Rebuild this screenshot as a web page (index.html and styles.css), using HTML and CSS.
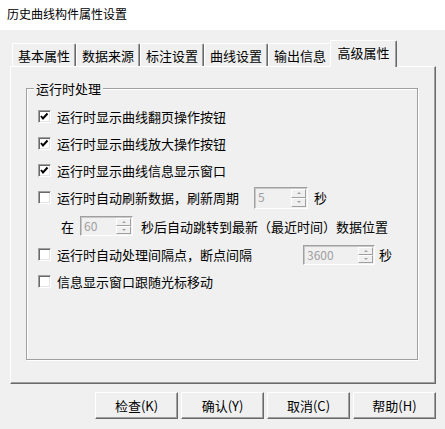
FILE: index.html
```html
<!DOCTYPE html>
<html lang="zh-CN">
<head>
    <meta charset="UTF-8">
    <title>历史曲线构件属性设置</title>
    <link rel="stylesheet" href="styles.css">
</head>
<body>
    <div class="titlebar">历史曲线构件属性设置</div>

    <div class="dialog">
        <div class="tabs">
            <div class="tab">基本属性</div>
            <div class="tab">数据来源</div>
            <div class="tab">标注设置</div>
            <div class="tab">曲线设置</div>
            <div class="tab">输出信息</div>
            <div class="tab active">高级属性</div>
        </div>

        <div class="panel">
            <div class="group">
                <span class="group-title">运行时处理</span>

                <div class="row">
                    <span class="check checked"><svg width="9" height="9" viewBox="0 0 9 9"><polyline points="1,4 3,6.5 7.5,1.5" fill="none" stroke="#000" stroke-width="2"/></svg></span>
                    <span>运行时显示曲线翻页操作按钮</span>
                </div>
                <div class="row">
                    <span class="check checked"><svg width="9" height="9" viewBox="0 0 9 9"><polyline points="1,4 3,6.5 7.5,1.5" fill="none" stroke="#000" stroke-width="2"/></svg></span>
                    <span>运行时显示曲线放大操作按钮</span>
                </div>
                <div class="row">
                    <span class="check checked"><svg width="9" height="9" viewBox="0 0 9 9"><polyline points="1,4 3,6.5 7.5,1.5" fill="none" stroke="#000" stroke-width="2"/></svg></span>
                    <span>运行时显示曲线信息显示窗口</span>
                </div>
                <div class="row">
                    <span class="check"></span>
                    <span class="label label-refresh">运行时自动刷新数据，刷新周期</span>
                    <span class="spin spin-tall">
                        <span class="spin-value">5</span>
                        <span class="spin-buttons"><span class="spin-up"></span><span class="spin-down"></span></span>
                    </span>
                    <span class="unit">秒</span>
                </div>
                <div class="row row-sub">
                    <span class="sub-label">在</span>
                    <span class="spin spin-small">
                        <span class="spin-value">60</span>
                        <span class="spin-buttons"><span class="spin-up"></span><span class="spin-down"></span></span>
                    </span>
                    <span class="sub-text">秒后自动跳转到最新（最近时间）数据位置</span>
                </div>
                <div class="row">
                    <span class="check"></span>
                    <span class="label label-gap">运行时自动处理间隔点，断点间隔</span>
                    <span class="spin spin-wide">
                        <span class="spin-value">3600</span>
                        <span class="spin-buttons"><span class="spin-up"></span><span class="spin-down"></span></span>
                    </span>
                    <span class="unit unit-near">秒</span>
                </div>
                <div class="row">
                    <span class="check"></span>
                    <span>信息显示窗口跟随光标移动</span>
                </div>
            </div>
        </div>

        <div class="buttons">
            <button class="btn">检查(K)</button>
            <button class="btn">确认(Y)</button>
            <button class="btn">取消(C)</button>
            <button class="btn">帮助(H)</button>
        </div>
    </div>
</body>
</html>
```

FILE: styles.css
```css
body {
    margin: 0;
    background-color: #f0f0f0;
    font-family: "Noto Sans CJK SC", "Liberation Sans", sans-serif;
    font-size: 12px;
    line-height: 14px;
    color: #000;
}
.titlebar {
    height: 30px;
    box-sizing: border-box;
    padding: 7px 0 0 7px;
    background-color: #fff;
}
.dialog {
    padding: 10px 9px 10px 10px;
    font-size: 13px;
    line-height: 15px;
}

/* tabs */
.tabs {
    display: flex;
    align-items: flex-end;
    height: 26px;
    padding-left: 2px;
}
.tab {
    width: 64px;
    height: 23px;
    box-sizing: border-box;
    padding-top: 4px;
    text-align: center;
    border-top: 1px solid #fff;
    border-left: 1px solid #fff;
    border-right: 1px solid #696969;
    box-shadow: inset -1px 0 0 #a0a0a0;
    border-radius: 2px 2px 0 0;
}
.tab.active {
    position: relative;
    z-index: 1;
    width: 67px;
    height: 27px;
    margin-left: -2px;
    margin-bottom: -1px;
    padding-top: 4px;
    background-color: #f0f0f0;
}

/* page under the tabs */
.panel {
    height: 318px;
    box-sizing: border-box;
    border-top: 1px solid #fff;
    border-left: 1px solid #fff;
    border-right: 1px solid #696969;
    border-bottom: 1px solid #696969;
    box-shadow: inset -1px -1px 0 #a0a0a0;
    padding: 21px 0 0 15px;
}
.group {
    position: relative;
    width: 392px;
    height: 272px;
    box-sizing: border-box;
    border: 1px solid #a0a0a0;
    box-shadow: inset 1px 1px 0 #fff, 1px 1px 0 #fff;
    padding: 14px 0 0 11px;
}
.group-title {
    position: absolute;
    top: -8px;
    left: 7px;
    padding: 0 2px;
    background-color: #f0f0f0;
}

.row {
    display: flex;
    align-items: center;
    height: 27px;
}
.row-sub {
    height: 30px;
}
.check {
    display: flex;
    align-items: center;
    justify-content: center;
    width: 13px;
    height: 13px;
    box-sizing: border-box;
    margin-right: 6px;
    background-color: #fff;
    border-top: 1px solid #a0a0a0;
    border-left: 1px solid #a0a0a0;
    border-right: 1px solid #fff;
    border-bottom: 1px solid #fff;
    box-shadow: inset 1px 1px 0 #696969, inset -1px -1px 0 #e3e3e3;
}
.label-refresh {
    width: 197px;
}
.label-gap {
    width: 246px;
}
.sub-label {
    margin-left: 23px;
    margin-right: 6px;
}
.sub-text {
    margin-left: 8px;
}
.unit {
    margin-left: 6px;
}
.unit-near {
    margin-left: 4px;
}

/* disabled spin boxes */
.spin {
    display: flex;
    height: 20px;
    box-sizing: border-box;
    border-top: 1px solid #a0a0a0;
    border-left: 1px solid #a0a0a0;
    border-right: 1px solid #fff;
    border-bottom: 1px solid #fff;
    box-shadow: inset 1px 1px 0 #c8c8c8;
    padding: 1px;
    font-size: 12px;
}
.spin-small {
    width: 53px;
}
.spin-tall {
    width: 54px;
    height: 22px;
}
.spin-wide {
    width: 72px;
}
.spin-value {
    flex: 1;
    padding-left: 2px;
    color: #a0a0a0;
    line-height: 16px;
}
.spin-buttons {
    display: flex;
    flex-direction: column;
    width: 15px;
}
.spin-up,
.spin-down {
    flex: 1;
    display: flex;
    align-items: center;
    justify-content: center;
    border-top: 1px solid #fff;
    border-left: 1px solid #fff;
    border-right: 1px solid #a0a0a0;
    border-bottom: 1px solid #a0a0a0;
    background-color: #f0f0f0;
}
.spin-up::after,
.spin-down::after {
    content: "";
    border-left: 2px solid transparent;
    border-right: 2px solid transparent;
}
.spin-up::after {
    border-bottom: 2px solid #a0a0a0;
}
.spin-down::after {
    border-top: 2px solid #a0a0a0;
}

/* dialog buttons */
.buttons {
    display: flex;
    justify-content: flex-end;
    gap: 3px;
    margin-top: 8px;
}
.btn {
    width: 83px;
    height: 27px;
    padding: 0;
    font: inherit;
    color: #000;
    background-color: #f0f0f0;
    border-top: 1px solid #fff;
    border-left: 1px solid #fff;
    border-right: 1px solid #696969;
    border-bottom: 1px solid #696969;
    box-shadow: inset -1px -1px 0 #a0a0a0;
}
```
